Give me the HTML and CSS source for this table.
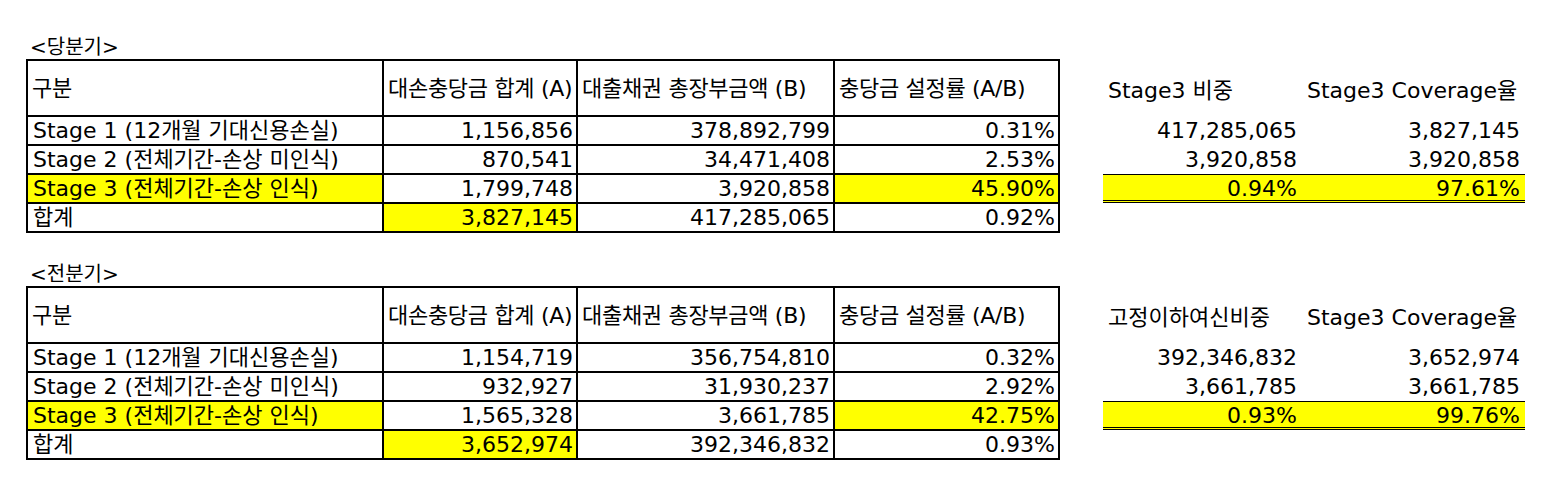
FILE: index.html
```html
<!DOCTYPE html>
<html lang="ko">
<head>
<meta charset="utf-8">
<link rel="stylesheet" href="styles.css">
</head>
<body>
<div class="page">
  <section class="block">
    <div class="title">&lt;당분기&gt;</div>
    <div class="row">
      <table class="grid">
        <colgroup><col class="c1"><col class="c2"><col class="c3"><col class="c4"></colgroup>
        <tr class="head"><td>구분</td><td>대손충당금 합계 (A)</td><td>대출채권 총장부금액 (B)</td><td>충당금 설정률 (A/B)</td></tr>
        <tr><td>Stage 1 (12개월 기대신용손실)</td><td class="num">1,156,856</td><td class="num">378,892,799</td><td class="num">0.31%</td></tr>
        <tr><td>Stage 2 (전체기간-손상 미인식)</td><td class="num">870,541</td><td class="num">34,471,408</td><td class="num">2.53%</td></tr>
        <tr><td class="hl">Stage 3 (전체기간-손상 인식)</td><td class="num">1,799,748</td><td class="num">3,920,858</td><td class="num hl">45.90%</td></tr>
        <tr><td>합계</td><td class="num hl">3,827,145</td><td class="num">417,285,065</td><td class="num">0.92%</td></tr>
      </table>
      <div class="side">
        <div class="sh">Stage3 비중</div><div class="sh">Stage3 Coverage율</div>
        <div class="sv">417,285,065</div><div class="sv">3,827,145</div>
        <div class="sv">3,920,858</div><div class="sv">3,920,858</div>
        <div class="sv total">0.94%</div><div class="sv total">97.61%</div>
      </div>
    </div>
  </section>
  <section class="block second">
    <div class="title">&lt;전분기&gt;</div>
    <div class="row">
      <table class="grid">
        <colgroup><col class="c1"><col class="c2"><col class="c3"><col class="c4"></colgroup>
        <tr class="head"><td>구분</td><td>대손충당금 합계 (A)</td><td>대출채권 총장부금액 (B)</td><td>충당금 설정률 (A/B)</td></tr>
        <tr><td>Stage 1 (12개월 기대신용손실)</td><td class="num">1,154,719</td><td class="num">356,754,810</td><td class="num">0.32%</td></tr>
        <tr><td>Stage 2 (전체기간-손상 미인식)</td><td class="num">932,927</td><td class="num">31,930,237</td><td class="num">2.92%</td></tr>
        <tr><td class="hl">Stage 3 (전체기간-손상 인식)</td><td class="num">1,565,328</td><td class="num">3,661,785</td><td class="num hl">42.75%</td></tr>
        <tr><td>합계</td><td class="num hl">3,652,974</td><td class="num">392,346,832</td><td class="num">0.93%</td></tr>
      </table>
      <div class="side">
        <div class="sh">고정이하여신비중</div><div class="sh">Stage3 Coverage율</div>
        <div class="sv">392,346,832</div><div class="sv">3,652,974</div>
        <div class="sv">3,661,785</div><div class="sv">3,661,785</div>
        <div class="sv total">0.93%</div><div class="sv total">99.76%</div>
      </div>
    </div>
  </section>
</div>
</body>
</html>
```
FILE: styles.css
```css
html, body {
  margin: 0;
  padding: 0;
  background: #fff;
}
body {
  font-family: "DejaVu Sans", "Noto Sans CJK KR", sans-serif;
  font-size: 22px;
  color: #000;
}
.page {
  padding: 35px 0 0 26px;
}
.block.second {
  margin-top: 29px;
}
.title {
  height: 24px;
  line-height: 24px;
  padding-left: 4px;
  font-size: 20px;
}
.row {
  display: flex;
  align-items: flex-start;
  gap: 43px;
}
.grid {
  border-collapse: collapse;
  table-layout: fixed;
  width: 1032px;
}
.c1 { width: 356px; }
.c2 { width: 194px; }
.c3 { width: 257px; }
.c4 { width: 225px; }
.grid td {
  border: 2px solid #000;
  height: 27px;
  padding: 0 3px 0 5px;
  line-height: 27px;
  white-space: nowrap;
  overflow: hidden;
  vertical-align: bottom;
}
.grid tr.head td {
  height: 54px;
  vertical-align: middle;
  padding-left: 4px;
  padding-right: 0;
  letter-spacing: -0.3px;
}
.grid td.num {
  text-align: right;
}
.hl {
  background: #ffff00;
}
.side {
  display: grid;
  grid-template-columns: 199px 223px;
  grid-template-rows: 57px 29px 29px 29px;
}
.sh {
  display: flex;
  align-items: center;
  padding-left: 5px;
  white-space: nowrap;
}
.sv {
  text-align: right;
  padding-right: 5px;
  line-height: 29px;
  white-space: nowrap;
}
.sv.total {
  background: #ffff00;
  border-top: 1px solid #000;
  border-bottom: 3px double #000;
  line-height: 28px;
}
```
